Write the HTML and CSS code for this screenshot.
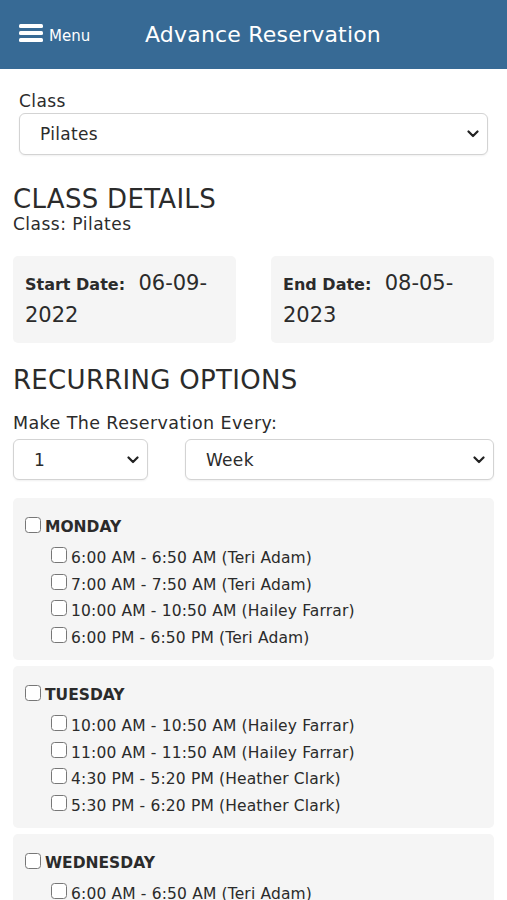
FILE: index.html
```html
<!DOCTYPE html>
<html lang="en">
<head>
    <meta charset="UTF-8">
    <meta name="viewport" content="width=device-width, initial-scale=1.0">
    <title>Advance Reservation</title>
    <link rel="stylesheet" href="styles.css">
</head>
<body>
    <div class="topbar">
        <div class="menu">
            <svg width="24" height="20" viewBox="0 0 24 20"><rect x="0" y="1" width="24" height="4" rx="1.5" fill="#fff"/><rect x="0" y="8" width="24" height="4" rx="1.5" fill="#fff"/><rect x="0" y="15" width="24" height="4" rx="1.5" fill="#fff"/></svg>
            <span>Menu</span>
        </div>
        <h1>Advance Reservation</h1>
    </div>

    <div class="content">
        <div class="field">
            <label>Class</label>
            <div class="select-wrap">
                <select><option>Pilates</option></select>
                <svg class="chev" width="12" height="8" viewBox="0 0 12 8"><path d="M1.5 1.5 L6 6 L10.5 1.5" fill="none" stroke="#222" stroke-width="2.2" stroke-linecap="round" stroke-linejoin="round"/></svg>
            </div>
        </div>

        <h2>CLASS DETAILS</h2>
        <p class="sub">Class: Pilates</p>

        <div class="dates">
            <div class="date-box"><b>Start Date:</b>&nbsp; 06-09-2022</div>
            <div class="date-box"><b>End Date:</b>&nbsp; 08-05-2023</div>
        </div>

        <h2 class="recur">RECURRING OPTIONS</h2>
        <div class="every-label">Make The Reservation Every:</div>
        <div class="every">
            <div class="select-wrap small">
                <select><option>1</option></select>
                <svg class="chev" width="12" height="8" viewBox="0 0 12 8"><path d="M1.5 1.5 L6 6 L10.5 1.5" fill="none" stroke="#222" stroke-width="2.2" stroke-linecap="round" stroke-linejoin="round"/></svg>
            </div>
            <div class="select-wrap wide">
                <select><option>Week</option></select>
                <svg class="chev" width="12" height="8" viewBox="0 0 12 8"><path d="M1.5 1.5 L6 6 L10.5 1.5" fill="none" stroke="#222" stroke-width="2.2" stroke-linecap="round" stroke-linejoin="round"/></svg>
            </div>
        </div>

        <div class="day">
            <label class="day-name"><input type="checkbox"> MONDAY</label>
            <ul>
                <li><label><input type="checkbox">6:00 AM - 6:50 AM (Teri Adam)</label></li>
                <li><label><input type="checkbox">7:00 AM - 7:50 AM (Teri Adam)</label></li>
                <li><label><input type="checkbox">10:00 AM - 10:50 AM (Hailey Farrar)</label></li>
                <li><label><input type="checkbox">6:00 PM - 6:50 PM (Teri Adam)</label></li>
            </ul>
        </div>
        <div class="day">
            <label class="day-name"><input type="checkbox"> TUESDAY</label>
            <ul>
                <li><label><input type="checkbox">10:00 AM - 10:50 AM (Hailey Farrar)</label></li>
                <li><label><input type="checkbox">11:00 AM - 11:50 AM (Hailey Farrar)</label></li>
                <li><label><input type="checkbox">4:30 PM - 5:20 PM (Heather Clark)</label></li>
                <li><label><input type="checkbox">5:30 PM - 6:20 PM (Heather Clark)</label></li>
            </ul>
        </div>
        <div class="day">
            <label class="day-name"><input type="checkbox"> WEDNESDAY</label>
            <ul>
                <li><label><input type="checkbox">6:00 AM - 6:50 AM (Teri Adam)</label></li>
                <li><label><input type="checkbox">7:00 AM - 7:50 AM (Teri Adam)</label></li>
            </ul>
        </div>
    </div>
</body>
</html>
```
FILE: styles.css
```css
body {
    margin: 0;
    padding: 0;
    font-family: "DejaVu Sans", sans-serif;
    color: #2b2b2b;
    background: #fff;
}

.topbar {
    height: 69px;
    background-color: #376a95;
    color: #fff;
    display: flex;
    align-items: center;
    padding: 0 19px;
    box-sizing: border-box;
}
.topbar .menu {
    display: flex;
    align-items: center;
    width: 126px;
}
.topbar .menu svg {
    margin-right: 6px;
    margin-top: -4px;
}
.topbar .menu span {
    font-size: 15px;
    margin-top: 2px;
}
.topbar h1 {
    margin: 0;
    font-size: 22px;
    font-weight: normal;
    letter-spacing: 0.2px;
}

.content {
    padding: 22px 13px 0 13px;
}

.field {
    padding: 0 6px 0 6px;
}
.field label {
    display: block;
    font-size: 17px;
    letter-spacing: 0.4px;
    margin-bottom: 2px;
}

.select-wrap {
    position: relative;
}
.select-wrap select {
    -webkit-appearance: none;
    appearance: none;
    width: 100%;
    height: 42px;
    border: 1.5px solid #d3d3d3;
    border-radius: 6px;
    background: #fff;
    font-family: "DejaVu Sans", sans-serif;
    font-size: 17px;
    letter-spacing: 0.3px;
    color: #2b2b2b;
    padding: 0 20px;
    box-shadow: 0 1px 2px #00000010;
}
.select-wrap .chev {
    position: absolute;
    right: 9px;
    top: 17px;
}

h2 {
    margin: 29px 0 0 0;
    font-size: 26px;
    font-weight: normal;
    letter-spacing: 0.3px;
    line-height: 30px;
}
.sub {
    margin: 0;
    font-size: 17px;
    letter-spacing: 0.5px;
    line-height: 20px;
}

.dates {
    display: flex;
    justify-content: space-between;
    margin-top: 22px;
}
.date-box {
    width: 223px;
    box-sizing: border-box;
    background: #f5f5f5;
    border-radius: 5px;
    padding: 12px 12px 14px 12px;
    font-size: 21px;
    line-height: 31px;
    height: 87px;
}
.date-box b {
    font-size: 16px;
    font-weight: 600;
}

h2.recur {
    margin-top: 22px;
}

.every-label {
    margin-top: 18px;
    font-size: 17.5px;
    letter-spacing: 0.4px;
}
.every {
    display: flex;
    gap: 37px;
    margin-top: 6px;
}
.every select {
    height: 41px;
}
.every .small {
    width: 135px;
}
.every .wide {
    flex: 1;
}

.day {
    background: #f5f5f5;
    border-radius: 5px;
    margin-top: 6px;
    padding: 20px 12px 9px 12px;
}
.every + .day {
    margin-top: 18px;
}
.day-name {
    display: flex;
    align-items: center;
    font-size: 15.5px;
    font-weight: bold;
}
.day ul {
    list-style: none;
    margin: 9px 0 0 0;
    padding: 0 0 0 26px;
}
.day li {
    font-size: 15.5px;
    letter-spacing: 0.15px;
    line-height: 26.5px;
}
.day li label {
    display: flex;
    align-items: center;
}

input[type="checkbox"] {
    -webkit-appearance: none;
    appearance: none;
    width: 16px;
    height: 16px;
    border: 1.3px solid #777;
    border-radius: 3.5px;
    background: #fff;
    margin: 0 4px 0 0;
    position: relative;
    top: -3px;
}
.day-name input[type="checkbox"] {
    top: -2px;
}
```
